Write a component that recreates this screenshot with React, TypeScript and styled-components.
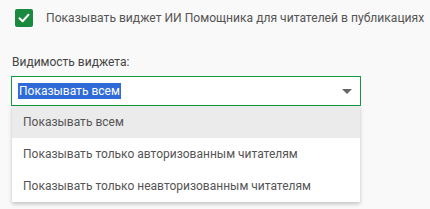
import React from "react";
import styled, { createGlobalStyle } from "styled-components";

const Global = createGlobalStyle`
  html, body { margin: 0; padding: 0; background: #f9f9f9; }
  body { font-family: Roboto, "Noto Sans", sans-serif; }
`;

const Page = styled.div`
  width: 430px;
  height: 209px;
  padding: 9px 0 0 11px;
  box-sizing: border-box;
  display: flex;
  flex-direction: column;
`;

const CheckRow = styled.label`
  display: flex;
  align-items: center;
  gap: 13px;
  padding-left: 4px;
  height: 18px;
  font-size: 12.1px;
  color: #555;
  white-space: nowrap;
`;

const Box = styled.span`
  width: 18px;
  height: 18px;
  border-radius: 2px;
  background: #198a3e;
  display: flex;
  align-items: center;
  justify-content: center;
  flex: none;
`;

const FieldLabel = styled.div`
  margin-top: 27px;
  padding-left: 1px;
  font-size: 12px;
  color: #444;
  line-height: 16px;
`;

const Field = styled.div`
  margin-top: 6px;
  width: 350px;
  position: relative;
`;

const Select = styled.div`
  height: 30px;
  box-sizing: border-box;
  border: 1px solid #0f9a41;
  background: #fff;
  display: flex;
  align-items: center;
  justify-content: space-between;
  padding: 0 8px 0 6px;
`;

const Selected = styled.span`
  background: #2f6bd8;
  color: #fff;
  font-size: 12px;
  line-height: 16px;
  padding: 0 1px;
`;

const Arrow = styled.span`
  width: 0;
  height: 0;
  border-left: 5px solid transparent;
  border-right: 5px solid transparent;
  border-top: 5px solid #666;
`;

const Menu = styled.div`
  position: absolute;
  left: 1px;
  right: 1px;
  top: 30px;
  background: #fff;
  box-shadow: 0 2px 4px rgba(0, 0, 0, 0.22);
  display: flex;
  flex-direction: column;
`;

const Option = styled.div<{ $active?: boolean }>`
  height: 32px;
  display: flex;
  align-items: center;
  padding-left: 11px;
  font-size: 12px;
  color: #555;
  white-space: nowrap;
  background: ${(p) => (p.$active ? "#ebebeb" : "#fff")};
`;

export default function App() {
  return (
    <>
      <Global />
      <Page>
        <CheckRow>
          <Box>
            <svg width="14" height="14" viewBox="0 0 14 14">
              <path d="M2.5 7.2 L5.6 10.2 L11.5 3.8" fill="none" stroke="#fff" strokeWidth="2" strokeLinecap="round" strokeLinejoin="round" />
            </svg>
          </Box>
          Показывать виджет ИИ Помощника для читателей в публикациях
        </CheckRow>
        <FieldLabel>Видимость виджета:</FieldLabel>
        <Field>
          <Select>
            <Selected>Показывать всем</Selected>
            <Arrow />
          </Select>
          <Menu>
            <Option $active>Показывать всем</Option>
            <Option>Показывать только авторизованным читателям</Option>
            <Option>Показывать только неавторизованным читателям</Option>
          </Menu>
        </Field>
      </Page>
    </>
  );
}
